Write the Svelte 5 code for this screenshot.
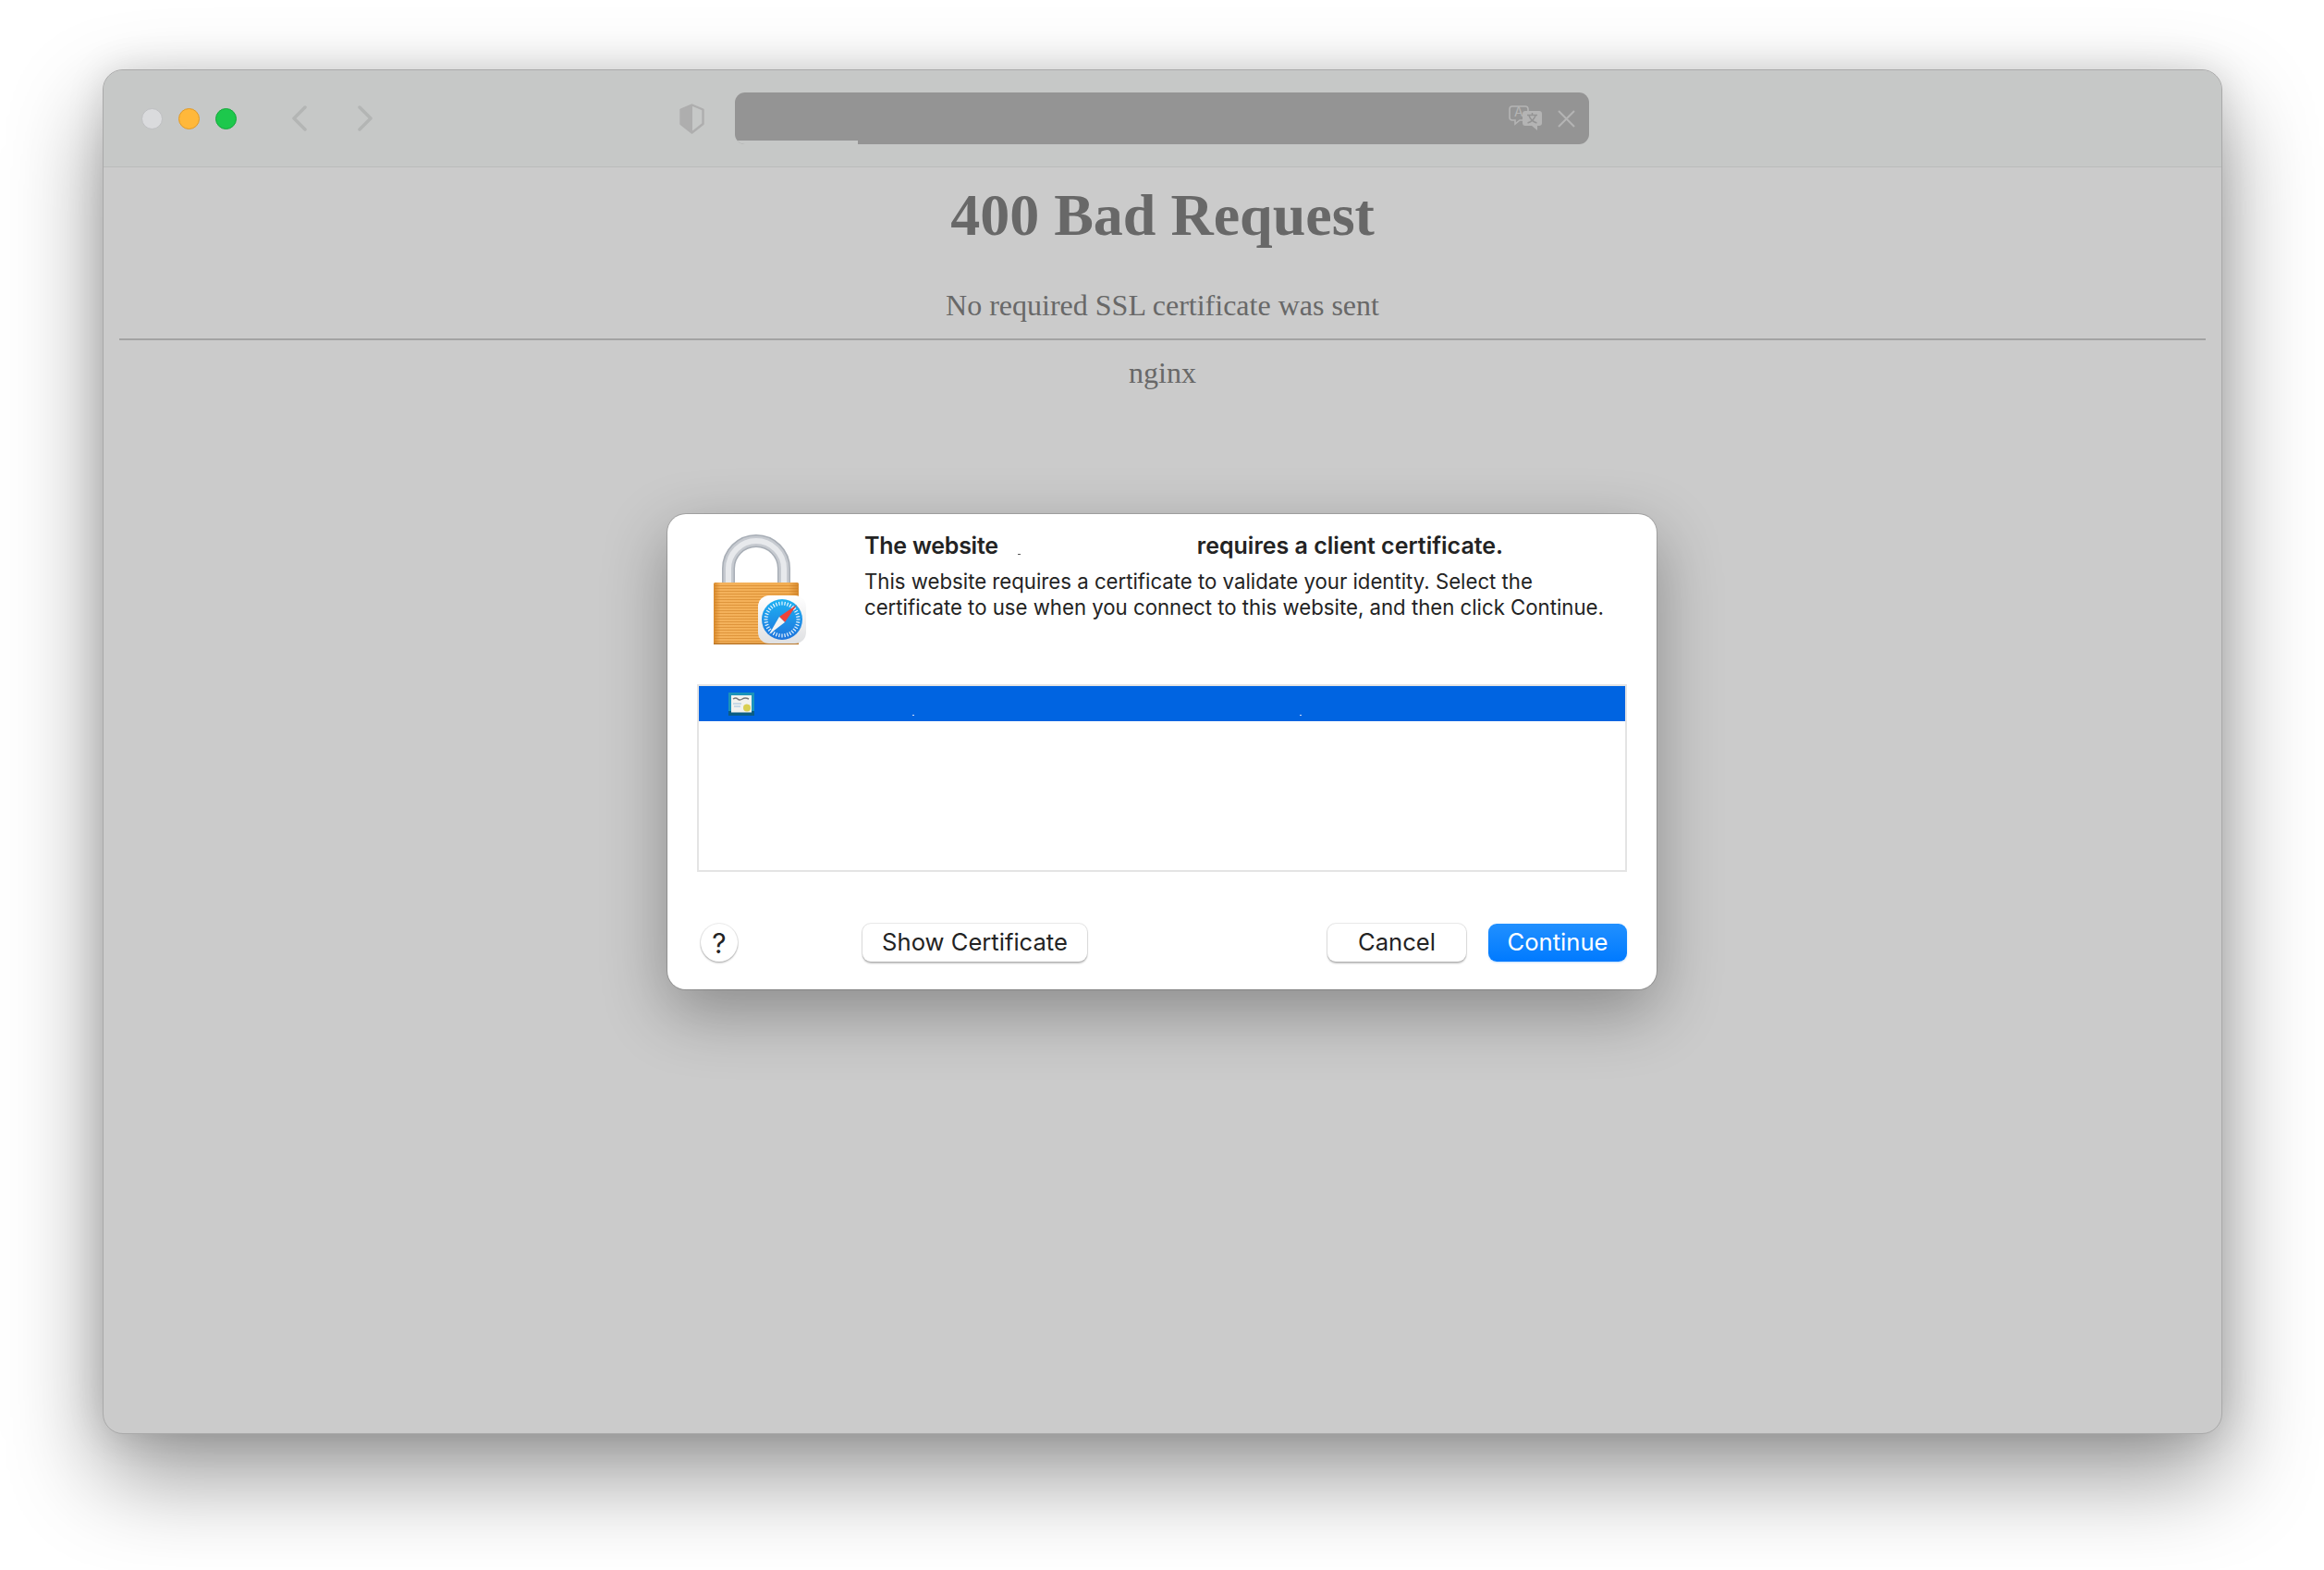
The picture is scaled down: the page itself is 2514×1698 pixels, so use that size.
<script>
  const ticks = Array.from({ length: 36 }, (_, i) => i * 10);
  const stripes = Array.from({ length: 21 }, (_, i) => 633 + i * 3);
</script>

<div class="stage">
  <div class="window">
    <header class="toolbar">
      <div class="lights">
        <span class="light grey"></span>
        <span class="light amber"></span>
        <span class="light green"></span>
      </div>
      <div class="nav">
        <svg width="16" height="28" viewBox="0 0 16 28"><path d="M14 2 L2 14 L14 26" /></svg>
        <svg width="16" height="28" viewBox="0 0 16 28"><path d="M2 2 L14 14 L2 26" /></svg>
      </div>
      <svg class="shield" width="27" height="33" viewBox="0 0 27 33">
        <path d="M13.5 1.5 L25.5 6.5 V22 L13.5 31.5 L1.5 22 V6.5 Z" fill="none" stroke="#aeaeae" stroke-width="2.4" stroke-linejoin="round" />
        <path d="M13.5 1.5 L1.5 6.5 V22 L13.5 31.5 Z" fill="#aeaeae" stroke="#aeaeae" stroke-linejoin="round" />
      </svg>
      <div class="url">
        <span class="progress"></span>
        <svg class="translate" width="37" height="32" viewBox="0 -4 37 32">
          <path d="M4 1 H18 Q21 1 21 4 V13 Q21 16 18 16 H12 L7 20 V16 H4 Q1 16 1 13 V4 Q1 1 4 1 Z" fill="none" stroke="#b4b4b4" stroke-width="1.6" />
          <text x="6" y="12" class="glyph">A</text>
          <path d="M18 6 H33 Q36 6 36 9 V19 Q36 22 33 22 H31 V27 L25 22 H18 Q15 22 15 19 V9 Q15 6 18 6 Z" fill="#b4b4b4" />
          <path d="M20 10.5 H31 M25.5 8 V10.5 M22 11 Q24 17 30.5 19 M29 11 Q27 17 20.5 19" fill="none" stroke="#949494" stroke-width="1.5" />
        </svg>
        <svg class="close" width="19" height="19" viewBox="0 0 19 19"><path d="M1 1 L18 18 M18 1 L1 18" /></svg>
      </div>
    </header>

    <main class="page">
      <h1>400 Bad Request</h1>
      <p class="msg">No required SSL certificate was sent</p>
      <hr />
      <p class="server">nginx</p>
    </main>

    <div class="dialog">
      <div class="top">
        <svg class="lock" width="104" height="124" viewBox="768 574 104 124">
          <defs>
            <linearGradient id="body" x1="0" x2="1" y1="0" y2="0">
              <stop offset="0" stop-color="#d98a2c" />
              <stop offset="0.08" stop-color="#f4b25c" />
              <stop offset="0.88" stop-color="#f2ad52" />
              <stop offset="1" stop-color="#d68a2f" />
            </linearGradient>
            <linearGradient id="dial" x1="0" x2="0" y1="0" y2="1">
              <stop offset="0" stop-color="#1fb2f3" />
              <stop offset="1" stop-color="#1d74dd" />
            </linearGradient>
            <linearGradient id="tile" x1="0" x2="0" y1="0" y2="1">
              <stop offset="0" stop-color="#ffffff" />
              <stop offset="1" stop-color="#dfe0e2" />
            </linearGradient>
          </defs>
          <path d="M788 632 V615 A30 30 0 0 1 848 615 V632" fill="none" stroke="#a8aeb6" stroke-width="14" />
          <path d="M788 632 V615 A30 30 0 0 1 848 615 V632" fill="none" stroke="#c6cad0" stroke-width="11" />
          <path d="M788 632 V615 A30 30 0 0 1 848 615 V632" fill="none" stroke="#e7e9ec" stroke-width="6" />
          <rect x="772" y="630" width="92" height="67" rx="1.5" fill="url(#body)" />
          {#each stripes as y}
            <rect x="773" {y} width="90" height="1" fill="#c97a1e" opacity="0.5" />
          {/each}
          <rect x="772" y="695.5" width="92" height="1.5" fill="#b9772a" />
          <rect x="820" y="644" width="52" height="52" rx="12" fill="url(#tile)" />
          <circle cx="846" cy="670" r="22" fill="url(#dial)" />
          {#each ticks as a}
            <rect x="845.4" y="650.5" width="1.2" height="4" fill="#fff" opacity="0.9" transform="rotate({a} 846 670)" />
          {/each}
          <path d="M862 654 L843 667 L849 673 Z" fill="#f0433a" />
          <path d="M832 686 L843 667 L849 673 Z" fill="#f4f4f4" />
        </svg>
        <div class="copy">
          <h2><span class="lead">The website</span><i class="speck"></i><span class="rest">requires a client certificate.</span></h2>
          <p>This website requires a certificate to validate your identity. Select the<br />certificate to use when you connect to this website, and then click Continue.</p>
        </div>
      </div>

      <div class="list">
        <div class="row">
          <svg class="cert" width="28" height="25" viewBox="0 0 28 25">
            <rect width="28" height="25" fill="#1b93ba" />
            <rect x="0" y="20" width="28" height="5" fill="#0a5d85" />
            <rect x="3" y="3" width="22" height="18.5" fill="#f2f2ee" />
            <path d="M5 7 Q8 5 10 7 T15 7 T22 7" fill="none" stroke="#777" stroke-width="1.5" />
            <path d="M5 12 H14 M6 15 H13" stroke="#9cc0de" stroke-width="1.2" />
            <circle cx="20" cy="16.5" r="4" fill="#d9cf52" />
          </svg>
          <i class="dot first"></i>
          <i class="dot second"></i>
        </div>
      </div>

      <div class="actions">
        <button class="help">?</button>
        <button class="show">Show Certificate</button>
        <div class="right">
          <button class="cancel">Cancel</button>
          <button class="primary">Continue</button>
        </div>
      </div>
    </div>
  </div>
</div>

<style>
  :global(body) {
    margin: 0;
    background: #fff;
  }
  .stage {
    box-sizing: border-box;
    width: 2514px;
    height: 1698px;
    padding: 75px 110px 147px 111px;
    overflow: hidden;
  }
  .window {
    position: relative;
    box-sizing: border-box;
    height: 100%;
    background: #cbcbcb;
    border-radius: 22px;
    border: 1px solid #a9a9a9;
    box-shadow: 0 44px 100px rgba(0, 0, 0, 0.42), 0 0 40px rgba(0, 0, 0, 0.12);
    display: flex;
    flex-direction: column;
  }
  .toolbar {
    box-sizing: border-box;
    height: 105px;
    flex: none;
    background: #c6c8c7;
    border-bottom: 1px solid #bbbcbb;
    border-radius: 21px 21px 0 0;
    display: flex;
    align-items: center;
    padding: 0 0 0 41px;
  }
  .lights {
    display: flex;
    gap: 17px;
  }
  .light {
    width: 23px;
    height: 23px;
    border-radius: 50%;
    box-sizing: border-box;
    border: 1px solid;
  }
  .grey { background: #dadbdd; border-color: #bebfc1; }
  .amber { background: #ffb83a; border-color: #e09a28; }
  .green { background: #1dc84c; border-color: #16a83c; }
  .nav {
    display: flex;
    gap: 55px;
    margin-left: 60px;
  }
  .nav path {
    fill: none;
    stroke: #b3b5b4;
    stroke-width: 3.5;
    stroke-linecap: round;
    stroke-linejoin: round;
  }
  .shield {
    margin-left: 332px;
  }
  .url {
    position: relative;
    box-sizing: border-box;
    width: 924px;
    height: 56px;
    margin-left: 33px;
    background: #949494;
    border-radius: 11px;
    overflow: hidden;
    display: flex;
    align-items: center;
    justify-content: flex-end;
    padding-right: 15px;
  }
  .progress {
    position: absolute;
    left: 0;
    bottom: 0;
    width: 133px;
    height: 4px;
    background: #c6c8c7;
  }
  .translate {
    margin: -4px 16px 0 0;
  }
  .glyph {
    font: 14px "Inter", sans-serif;
    fill: #b4b4b4;
  }
  .close path {
    stroke: #b4b4b4;
    stroke-width: 2;
    fill: none;
  }
  .page {
    flex: 1;
    text-align: center;
    font-family: "Liberation Serif", serif;
    color: #686868;
    padding: 0 17px;
  }
  h1 {
    margin: 15px 0 0;
    font-size: 64px;
    line-height: 74px;
    font-weight: 700;
  }
  .msg {
    margin: 42px 0 0;
    font-size: 32px;
    line-height: 37px;
  }
  hr {
    margin: 17px 0 0;
    border: 0;
    height: 2px;
    background: #a3a3a3;
  }
  .server {
    margin: 17px 0 0;
    font-size: 32px;
    line-height: 37px;
  }
  .dialog {
    position: absolute;
    left: 610px;
    top: 480px;
    box-sizing: border-box;
    width: 1070px;
    height: 514px;
    background: #fff;
    border-radius: 20px;
    box-shadow: 0 24px 70px rgba(0, 0, 0, 0.32), 0 0 0 1px rgba(0, 0, 0, 0.16);
    padding: 18px 32px 30px;
    display: flex;
    flex-direction: column;
    font-family: "Inter", sans-serif;
    color: #232323;
  }
  .top {
    display: flex;
    height: 166px;
    flex: none;
  }
  .lock {
    flex: none;
    margin-left: 14px;
  }
  .copy {
    margin-left: 63px;
    padding-top: 1px;
  }
  h2 {
    margin: 0;
    font-size: 25px;
    line-height: 30px;
    font-weight: 600;
    display: flex;
    align-items: flex-end;
  }
  .lead {
    letter-spacing: -0.25px;
  }
  .speck {
    width: 3px;
    height: 1px;
    background: #555;
    margin: 0 0 5px 21px;
  }
  .rest {
    margin-left: 191px;
  }
  .copy p {
    margin: 10px 0 0;
    font-size: 22.2px;
    line-height: 27.5px;
    font-weight: 400;
  }
  .list {
    box-sizing: border-box;
    height: 203px;
    flex: none;
    border: 2px solid #e4e4e4;
  }
  .row {
    height: 38px;
    background: #0064e1;
    position: relative;
    display: flex;
    align-items: flex-start;
    padding: 7px 0 0 32px;
    box-sizing: border-box;
  }
  .dot {
    position: absolute;
    top: 31px;
    width: 2px;
    height: 1px;
    background: #cfe0f8;
  }
  .dot.first { left: 231px; }
  .dot.second { left: 650px; }
  .actions {
    margin-top: 56px;
    display: flex;
    align-items: center;
  }
  button {
    font-family: inherit;
    font-size: 25.6px;
    color: #232323;
    height: 41px;
    padding: 0 0 2px;
    background: #fff;
    border: 0;
    border-radius: 9px;
    box-shadow: 0 0 0 1px rgba(0, 0, 0, 0.08), 0 1.5px 2px rgba(0, 0, 0, 0.25);
  }
  .help {
    width: 40px;
    border-radius: 50%;
    margin-left: 4px;
    font-size: 30px;
    font-weight: 400;
    padding: 0;
  }
  .show {
    width: 243px;
    margin-left: 135px;
  }
  .right {
    margin-left: auto;
    display: flex;
    gap: 24px;
  }
  .cancel {
    width: 150px;
  }
  .primary {
    width: 150px;
    color: #fff;
    background: linear-gradient(#2190ff, #007aff);
    box-shadow: 0 1px 2px rgba(0, 122, 255, 0.25);
  }
</style>
